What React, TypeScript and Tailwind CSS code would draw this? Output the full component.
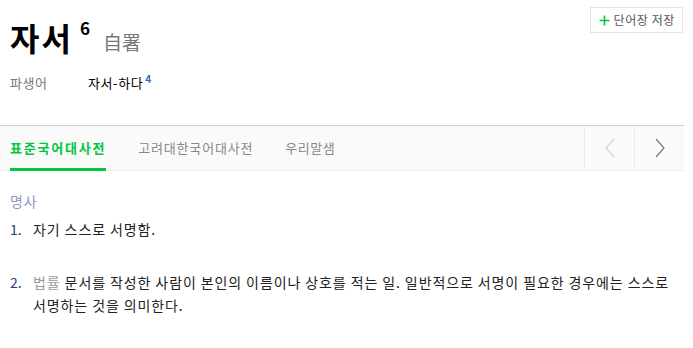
const KR = { fontFamily: '"Noto Sans CJK KR", "Noto Sans", sans-serif' };

function ChevronLeft({ className }: { className?: string }) {
  return (
    <svg width="12" height="20" viewBox="0 0 12 20" className={className} fill="none">
      <path d="M10 1 L2 10 L10 19" stroke="currentColor" strokeWidth="1.2" />
    </svg>
  );
}

function ChevronRight({ className }: { className?: string }) {
  return (
    <svg width="12" height="20" viewBox="0 0 12 20" className={className} fill="none">
      <path d="M2 1 L10 10 L2 19" stroke="currentColor" strokeWidth="1.2" />
    </svg>
  );
}

export default function App() {
  return (
    <div className="w-[693px] h-[348px] bg-white text-[#222] overflow-hidden" style={KR}>
      <div className="w-[684px]">
        {/* header */}
        <div className="relative px-[10px] pt-[17px] h-[125px]">
          <div className="flex items-start">
            <span className="text-[32px] font-bold leading-[40px] text-black tracking-[2px]">자서</span>
            <span className="ml-[7px] mt-[1px] text-[17px] font-bold leading-[20px] text-black">6</span>
            <span className="ml-[13px] mt-[13px] text-[19px] leading-[24px] text-[#777]">自署</span>
          </div>
          <div className="flex items-center mt-[17px] text-[13px] leading-[18px]">
            <span className="w-[78px] text-[#777] tracking-[0.5px]">파생어</span>
            <span className="text-black tracking-[0.6px]">자서-하다</span>
            <span className="ml-[2px] -mt-[8px] text-[10px] font-bold text-[#2a6bc4]">4</span>
          </div>
          <button className="absolute right-[1px] top-[7px] h-[26px] pl-[8px] pr-[7px] flex items-center gap-[4px] border border-[#e5e5e5] bg-white text-[12px] text-[#555] tracking-[0.6px]">
            <svg width="11" height="11" viewBox="0 0 11 11">
              <path d="M5.5 0.5 V10.5 M0.5 5.5 H10.5" stroke="#00c73c" strokeWidth="1.6" />
            </svg>
            <span>단어장 저장</span>
          </button>
        </div>

        {/* tabs */}
        <div className="flex h-[46px] bg-[#fafafa] border-t border-[#cfcfcf] border-b border-b-[#ededed]">
          <div className="flex flex-1 pl-[10px] gap-[32px] text-[13px]">
            <div className="relative flex items-center font-bold text-[#00c73c] tracking-[1.8px]">
              표준국어대사전
              <div className="absolute left-0 right-0 bottom-[-1px] h-[3px] bg-[#00c73c]" />
            </div>
            <div className="flex items-center text-[#888] tracking-[0.8px]">고려대한국어대사전</div>
            <div className="flex items-center text-[#888] tracking-[0.6px]">우리말샘</div>
          </div>
          <div className="w-[50px] flex items-center justify-center border-l border-[#ececec] text-[#d6d6d6]">
            <ChevronLeft />
          </div>
          <div className="w-[50px] flex items-center justify-center border-l border-[#ececec] text-[#777]">
            <ChevronRight />
          </div>
        </div>

        {/* definitions */}
        <div className="px-[10px] pt-[20px] text-[14px] tracking-[0.9px]">
          <div className="text-[#8a9cbc] leading-[20px]">명사</div>
          <div className="flex mt-[7px] leading-[23px]">
            <span className="w-[23px] shrink-0 text-[#1f3f7a] tracking-normal">1.</span>
            <span className="text-[#222]">자기 스스로 서명함.</span>
          </div>
          <div className="flex mt-[30px] leading-[23px]">
            <span className="w-[23px] shrink-0 text-[#1f3f7a] tracking-normal">2.</span>
            <p className="text-[#222] break-keep">
              <span className="text-[#999]">법률</span>{' '}문서를 작성한 사람이 본인의 이름이나 상호를 적는 일. 일반적으로 서명이 필요한 경우에는 스스로 서명하는 것을 의미한다.
            </p>
          </div>
        </div>
      </div>
    </div>
  );
}
